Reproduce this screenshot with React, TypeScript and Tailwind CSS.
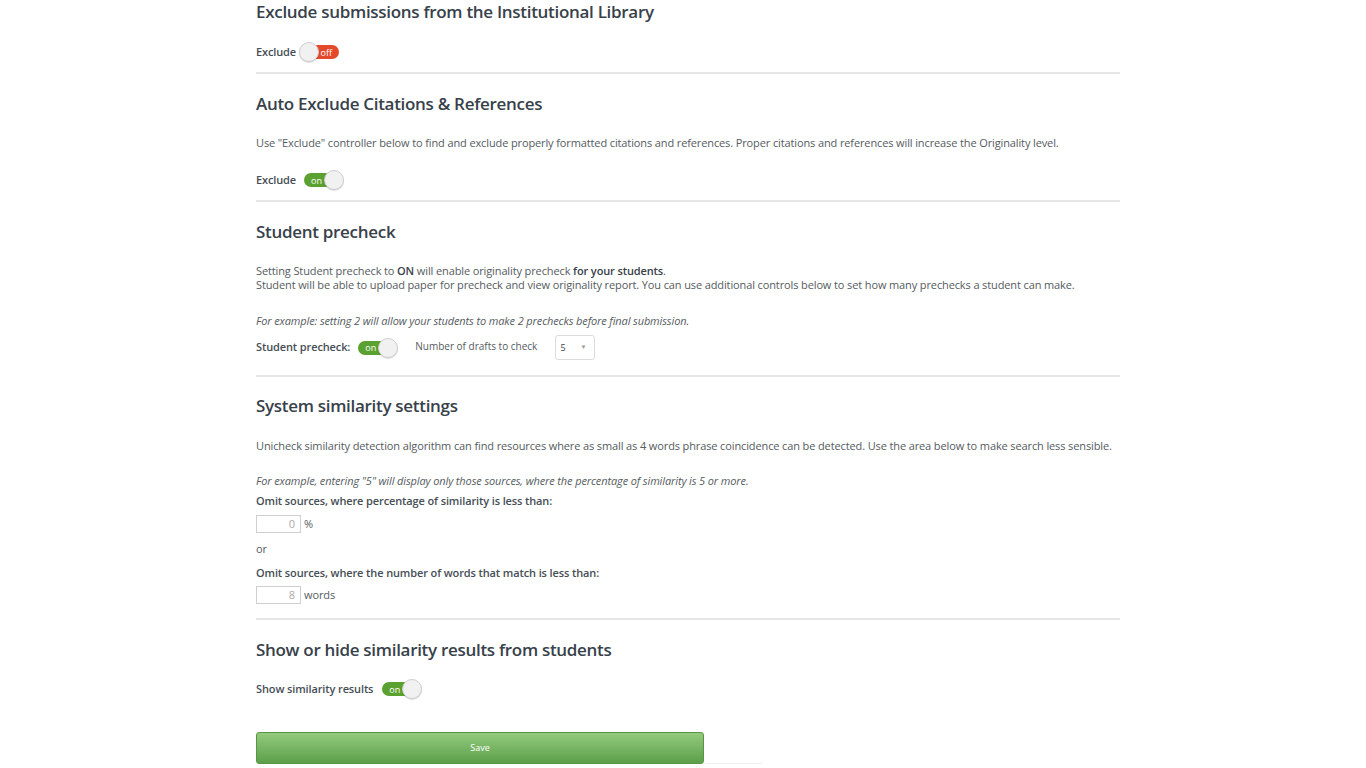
import React from "react";

const font = { fontFamily: '"Open Sans", "Noto Sans", sans-serif' };

function Toggle({ on }: { on: boolean }) {
  return (
    <div className="relative w-[44px] h-[20px] shrink-0">
      {on ? (
        <>
          <div className="absolute left-[4px] top-[3px] w-[34px] h-[14px] rounded-full bg-[#5ba12f] flex items-center pl-[7px] text-[9px] leading-none text-white tracking-normal">
            on
          </div>
          <div className="absolute left-[24px] top-0 w-[20px] h-[20px] rounded-full bg-[#f1f1f1] border border-[#cfcfcf] shadow-[0_1px_1px_rgba(0,0,0,0.15)]" />
        </>
      ) : (
        <>
          <div className="absolute left-[3px] top-[3px] w-[37px] h-[14px] rounded-full bg-[#e4492b] flex items-center justify-end pr-[7px] text-[9px] leading-none text-white tracking-normal">
            off
          </div>
          <div className="absolute left-0 top-0 w-[20px] h-[20px] rounded-full bg-[#f1f1f1] border border-[#cfcfcf] shadow-[0_1px_1px_rgba(0,0,0,0.15)]" />
        </>
      )}
    </div>
  );
}

function Heading({ children }: { children: React.ReactNode }) {
  return (
    <h2 className="text-[17px] leading-[24px] font-semibold text-[#37414a] tracking-[-0.3px]">
      {children}
    </h2>
  );
}

function Divider() {
  return <div className="h-[2px] bg-[#e6e6e6]" />;
}

const label = "font-semibold text-[11px] text-[#464e55]";

export default function App() {
  return (
    <div className="min-h-screen bg-white" style={font}>
      <div className="ml-[256px] w-[864px] text-[11px] text-[#555b60] tracking-[-0.12px]">
        {/* Section 1 */}
        <Heading>Exclude submissions from the Institutional Library</Heading>
        <div className="mt-[18px] flex items-center h-[20px] gap-[3px]">
          <span className={label}>Exclude</span>
          <Toggle on={false} />
        </div>
        <div className="mt-[10px]"><Divider /></div>

        {/* Section 2 */}
        <div className="mt-[18px]"><Heading>Auto Exclude Citations &amp; References</Heading></div>
        <p className="mt-[20px] leading-[14px]">
          Use "Exclude" controller below to find and exclude properly formatted citations and references. Proper citations and references will increase the Originality level.
        </p>
        <div className="mt-[20px] flex items-center h-[20px] gap-[4px]">
          <span className={label}>Exclude</span>
          <Toggle on={true} />
        </div>
        <div className="mt-[10px]"><Divider /></div>

        {/* Section 3 */}
        <div className="mt-[18px]"><Heading>Student precheck</Heading></div>
        <p className="mt-[20px] leading-[14px]">
          Setting Student precheck to <span className="font-semibold text-[#37414a]">ON</span> will enable originality precheck{" "}
          <span className="font-semibold text-[#37414a]">for your students</span>.
          <br />
          Student will be able to upload paper for precheck and view originality report. You can use additional controls below to set how many prechecks a student can make.
        </p>
        <p className="mt-[22px] leading-[14px] italic">
          For example: setting 2 will allow your students to make 2 prechecks before final submission.
        </p>
        <div className="mt-[7px] flex items-center h-[25px]">
          <span className={label}>Student precheck:</span>
          <div className="ml-[4px]"><Toggle on={true} /></div>
          <span className="ml-[17px] -mt-[2px] text-[10px] tracking-normal">Number of drafts to check</span>
          <div className="ml-[18px] w-[40px] h-[25px] border border-[#dcdcdc] rounded-[3px] flex items-center justify-between pl-[4px] pr-[8px] text-[9px] text-[#444]">
            <span>5</span>
            <span className="text-[6px] text-[#999]">▼</span>
          </div>
        </div>
        <div className="mt-[15px]"><Divider /></div>

        {/* Section 4 */}
        <div className="mt-[17px]"><Heading>System similarity settings</Heading></div>
        <p className="mt-[21px] leading-[14px]">
          Unicheck similarity detection algorithm can find resources where as small as 4 words phrase coincidence can be detected. Use the area below to make search less sensible.
        </p>
        <p className="mt-[21px] leading-[14px] italic">
          For example, entering "5" will display only those sources, where the percentage of similarity is 5 or more.
        </p>
        <p className="mt-[6px] leading-[14px] font-semibold text-[#464e55]">
          Omit sources, where percentage of similarity is less than:
        </p>
        <div className="mt-[7px] flex items-center h-[18px] gap-[3px]">
          <div className="w-[45px] h-[18px] border border-[#cfcfcf] flex items-center justify-end pr-[5px] text-[#aaa]">0</div>
          <span>%</span>
        </div>
        <p className="mt-[9px] leading-[14px]">or</p>
        <p className="mt-[10px] leading-[14px] font-semibold text-[#464e55]">
          Omit sources, where the number of words that match is less than:
        </p>
        <div className="mt-[6px] flex items-center h-[18px] gap-[3px]">
          <div className="w-[45px] h-[18px] border border-[#cfcfcf] flex items-center justify-end pr-[5px] text-[#aaa]">8</div>
          <span>words</span>
        </div>
        <div className="mt-[14px]"><Divider /></div>

        {/* Section 5 */}
        <div className="mt-[18px]"><Heading>Show or hide similarity results from students</Heading></div>
        <div className="mt-[17px] flex items-center h-[20px] gap-[5px]">
          <span className={label}>Show similarity results</span>
          <Toggle on={true} />
        </div>
        <div className="mt-[33px] flex items-end">
          <button className="w-[448px] h-[32px] rounded-[3px] border border-[#5c9447] bg-gradient-to-b from-[#93cb7d] to-[#5c9f4a] text-white text-[9px] tracking-normal">
            Save
          </button>
          <div className="ml-[2px] w-[56px] h-[1px] bg-[#eeeeee]" />
        </div>
      </div>
    </div>
  );
}
